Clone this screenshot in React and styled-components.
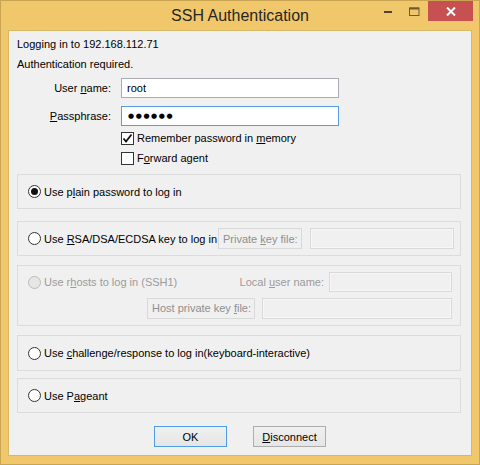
import React from 'react'
import styled, { createGlobalStyle } from 'styled-components'

const Global = createGlobalStyle`
  html, body { margin: 0; padding: 0; background: #ffffff; }
  * { box-sizing: border-box; }
`

const Window = styled.div`
  width: 480px;
  height: 465px;
  border: 1px solid #c9a453;
  background: #f0c86b;
  display: flex;
  flex-direction: column;
  font-family: "Liberation Sans", Arial, sans-serif;
  font-size: 11px;
  color: #000;
`

const TitleBar = styled.div`
  height: 29px;
  display: grid;
  grid-template-columns: 1fr auto 1fr;
  align-items: start;
`

const Title = styled.div`
  grid-column: 2;
  font-size: 16px;
  line-height: 18px;
  padding-top: 6px;
  color: #262626;
`

const Controls = styled.div`
  grid-column: 3;
  justify-self: end;
  display: flex;
  margin-right: 6px;
`

const CtlBtn = styled.div`
  width: ${p => p.$w}px;
  height: 20px;
  display: flex;
  align-items: center;
  justify-content: center;
  background: ${p => p.$bg || 'transparent'};
`

const Client = styled.div`
  flex: 1;
  margin: 0 7px 8px 7px;
  background: #f0f0f0;
  border: 1px solid #d9b865;
  padding: 5px 10px 0 8px;
  display: flex;
  flex-direction: column;
`

const Line = styled.div`
  line-height: 16px;
  height: 16px;
  margin-top: ${p => p.$mt || 0}px;
`

const FormRow = styled.div`
  display: flex;
  align-items: center;
  height: 20px;
  margin-top: ${p => p.$mt || 0}px;
`

const Label = styled.div`
  width: 95px;
  text-align: right;
  padding-right: 1px;
  margin-right: 9px;
`

const Field = styled.div`
  width: 218px;
  height: 20px;
  background: #fff;
  border: 1px solid ${p => (p.$focus ? '#569de5' : '#abadb3')};
  padding-left: ${p => p.$pl || 5}px;
  display: flex;
  align-items: center;
  line-height: 16px;
`

const Dots = styled.span`
  font-family: "DejaVu Sans", sans-serif;
  font-size: 7px;
  letter-spacing: 1.6px;
`

const CheckRow = styled.div`
  display: flex;
  align-items: center;
  height: 20px;
  padding-left: 104px;
  margin-top: ${p => p.$mt || 0}px;
`

const Box = styled.div`
  width: 13px;
  height: 13px;
  border: 1px solid #333;
  background: #fff;
  margin-right: 3px;
  display: flex;
  align-items: center;
  justify-content: center;
`

const Group = styled.div`
  border: 1px solid #dcdcdc;
  margin-top: ${p => p.$mt}px;
  height: ${p => p.$h}px;
  padding: ${p => p.$pad || '0 6px 0 10px'};
  display: flex;
  flex-direction: column;
  justify-content: ${p => (p.$top ? 'flex-start' : 'center')};
`

const GRow = styled.div`
  display: flex;
  align-items: center;
  height: ${p => p.$h || 20}px;
  margin-top: ${p => p.$mt || 0}px;
  margin-left: ${p => (p.$auto ? 'auto' : '0')};
  justify-content: ${p => (p.$end ? 'flex-end' : 'flex-start')};
`

const Radio = styled.div`
  width: 13px;
  height: 13px;
  border-radius: 50%;
  border: 1px solid ${p => (p.$disabled ? '#bcbcbc' : '#333')};
  background: ${p => (p.$disabled ? '#e6e6e6' : '#fff')};
  margin-right: 3px;
  display: flex;
  align-items: center;
  justify-content: center;
  &::after {
    content: '';
    display: ${p => (p.$checked ? 'block' : 'none')};
    width: 7px;
    height: 7px;
    border-radius: 50%;
    background: #111;
  }
`

const Text = styled.span`
  color: ${p => (p.$disabled ? '#9b9b9b' : '#000')};
  white-space: nowrap;
`

const KeyLabel = styled.div`
  margin-left: ${p => (p.$auto ? 'auto' : '0')};
  width: ${p => p.$w}px;
  height: 21px;
  border: 1px solid #d9d9d9;
  color: #8f8f8f;
  display: flex;
  align-items: center;
  padding-left: 4px;
  margin-right: ${p => p.$mr}px;
  white-space: nowrap;
`

const DisabledField = styled.div`
  width: ${p => p.$w}px;
  height: ${p => p.$h || 21}px;
  border: 1px solid #d9d9d9;
  box-shadow: inset 0 0 0 1px #f7f7f7;
  background: #f0f0f0;
`

const PlainLabel = styled.span`
  color: #9b9b9b;
  margin-right: 5px;
  white-space: nowrap;
`

const Buttons = styled.div`
  display: flex;
  justify-content: center;
  gap: 26px;
  margin-top: 13px;
  padding-left: 2px;
`

const Button = styled.div`
  width: 73px;
  height: 21px;
  border: 1px solid ${p => (p.$default ? '#4e9de6' : '#adadad')};
  background: linear-gradient(#f0f0f0, #e5e5e5);
  display: flex;
  align-items: center;
  justify-content: center;
`

const U = styled.span`
  text-decoration: underline;
  text-underline-offset: 1px;
`

const Check = () => (
  <svg width="11" height="11" viewBox="0 0 11 11">
    <path d="M1.5 5.5 L4 8.5 L9.5 1.5" fill="none" stroke="#111" strokeWidth="1.8" />
  </svg>
)

export default function App() {
  return (
    <>
      <Global />
      <Window>
        <TitleBar>
          <Title>SSH Authentication</Title>
          <Controls>
            <CtlBtn $w={26}>
              <svg width="9" height="8" viewBox="0 0 9 8">
                <rect x="0" y="4" width="8" height="2" fill="#4d4531" />
              </svg>
            </CtlBtn>
            <CtlBtn $w={27}>
              <svg width="11" height="9" viewBox="0 0 11 9">
                <rect x="0.5" y="1" width="9.5" height="7.5" fill="none" stroke="#6a5c36" strokeWidth="1" />
                <rect x="0.5" y="0.5" width="9.5" height="2" fill="#6a5c36" />
              </svg>
            </CtlBtn>
            <CtlBtn $w={45} $bg="#c75050">
              <svg width="10" height="9" viewBox="0 0 10 9">
                <path d="M1 0.5 L9 8.5 M9 0.5 L1 8.5" stroke="#fff" strokeWidth="2" />
              </svg>
            </CtlBtn>
          </Controls>
        </TitleBar>
        <Client>
          <Line>Logging in to 192.168.112.71</Line>
          <Line $mt={4}>Authentication required.</Line>
          <FormRow $mt={6}>
            <Label>User <U>n</U>ame:</Label>
            <Field>root</Field>
          </FormRow>
          <FormRow $mt={8}>
            <Label><U>P</U>assphrase:</Label>
            <Field $focus $pl={6}><Dots>●●●●●●</Dots></Field>
          </FormRow>
          <CheckRow $mt={2}>
            <Box><Check /></Box>
            <Text>Remember password in <U>m</U>emory</Text>
          </CheckRow>
          <CheckRow>
            <Box />
            <Text>F<U>o</U>rward agent</Text>
          </CheckRow>

          <Group $mt={6} $h={35}>
            <GRow>
              <Radio $checked />
              <Text>Use p<U>l</U>ain password to log in</Text>
            </GRow>
          </Group>

          <Group $mt={12} $h={35}>
            <GRow>
              <Radio />
              <Text>Use <U>R</U>SA/DSA/ECDSA key to log in</Text>
              <KeyLabel $auto $w={84} $mr={8}><span>Private <U>k</U>ey file:</span></KeyLabel>
              <DisabledField $w={144} />
            </GRow>
          </Group>

          <Group $mt={9} $h={61} $top $pad="6px 8px 0 10px">
            <GRow>
              <Radio $disabled />
              <Text $disabled>Use r<U>h</U>osts to log in (SSH1)</Text>
              <GRow $auto>
                <PlainLabel>Local <U>u</U>ser name:</PlainLabel>
                <DisabledField $w={123} $h={20} />
              </GRow>
            </GRow>
            <GRow $end $mt={6}>
              <KeyLabel $w={108} $mr={7}><span>Host private key <U>f</U>ile:</span></KeyLabel>
              <DisabledField $w={190} $h={21} />
            </GRow>
          </Group>

          <Group $mt={9} $h={36}>
            <GRow>
              <Radio />
              <Text>Use <U>c</U>hallenge/response to log in(keyboard-interactive)</Text>
            </GRow>
          </Group>

          <Group $mt={7} $h={35}>
            <GRow>
              <Radio />
              <Text>Use P<U>a</U>geant</Text>
            </GRow>
          </Group>

          <Buttons>
            <Button $default>OK</Button>
            <Button><U>D</U>isconnect</Button>
          </Buttons>
        </Client>
      </Window>
    </>
  )
}
